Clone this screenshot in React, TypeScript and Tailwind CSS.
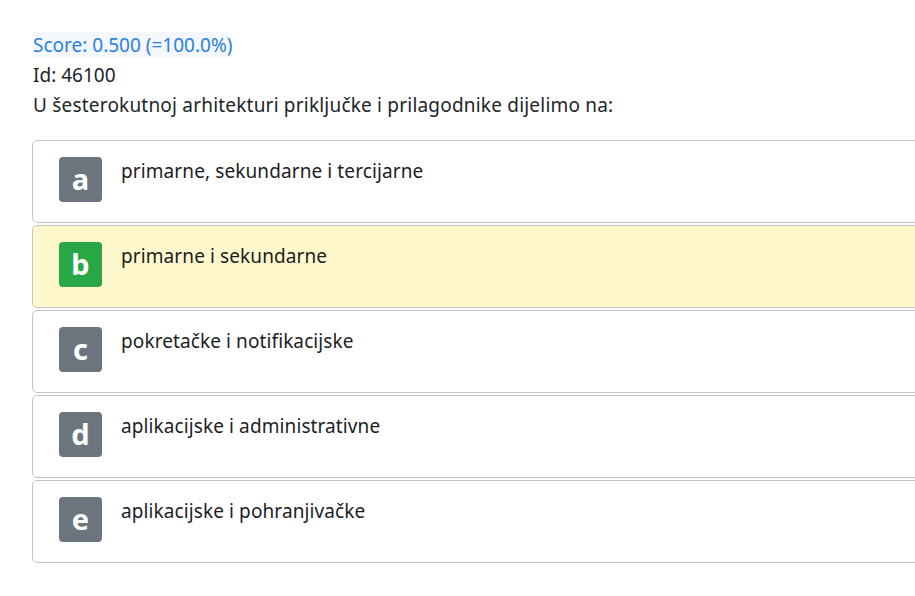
import React from "react";

const options = [
  { key: "a", text: "primarne, sekundarne i tercijarne" },
  { key: "b", text: "primarne i sekundarne", correct: true },
  { key: "c", text: "pokretačke i notifikacijske" },
  { key: "d", text: "aplikacijske i administrativne" },
  { key: "e", text: "aplikacijske i pohranjivačke" },
];

const Option = ({ letter, text, correct }: { letter: string; text: string; correct?: boolean }) => (
  <div
    className={`flex items-start h-[83px] w-[960px] border border-[#c4c4c4] rounded-[5px] pl-[26px] pt-[16px] ${
      correct ? "bg-[#fff8cd]" : "bg-white"
    }`}
  >
    <div
      className={`flex items-center justify-center w-[43px] h-[45px] rounded-[4px] text-white text-[29px] font-bold leading-none pb-[3px] ${
        correct ? "bg-[#28a745]" : "bg-[#6c757d]"
      }`}
    >
      {letter}
    </div>
    <div className="ml-[19px] -mt-[1px] text-[19px] tracking-[0.1px] leading-[30px] text-[#1d1d1f]">{text}</div>
  </div>
);

export default function App() {
  return (
    <div
      className="w-[915px] h-[596px] overflow-hidden bg-white pt-[30px] pl-[33px]"
      style={{ fontFamily: "'Noto Sans', sans-serif" }}
    >
      <div className="text-[19px] leading-[30px]">
        <span className="text-[#2a7fe3] bg-[#f4f7fb]">Score: 0.500 (=100.0%)</span>
      </div>
      <div className="text-[19px] leading-[30px] text-[#212529]">Id: 46100</div>
      <div className="text-[19px] tracking-[0.2px] leading-[30px] text-[#212529]">
        U šesterokutnoj arhitekturi priključke i prilagodnike dijelimo na:
      </div>
      <div className="mt-[20px] -ml-px flex flex-col gap-[2px]">
        {options.map((o) => (
          <Option key={o.key} letter={o.key} text={o.text} correct={o.correct} />
        ))}
      </div>
    </div>
  );
}
